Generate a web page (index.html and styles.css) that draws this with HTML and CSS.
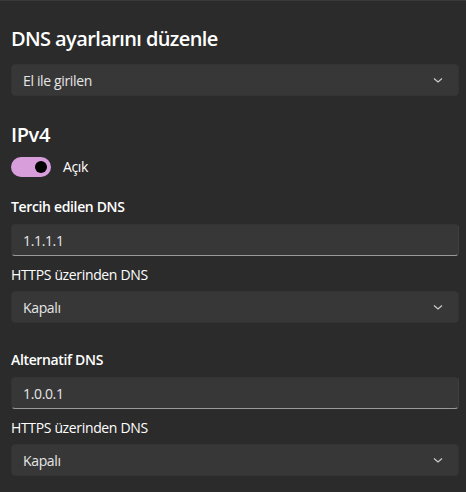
FILE: index.html
```html
<!DOCTYPE html>
<html lang="tr">
<head>
  <meta charset="UTF-8">
  <meta name="viewport" content="width=device-width, initial-scale=1.0">
  <title>DNS ayarlarını düzenle</title>
  <link rel="stylesheet" href="styles.css">
</head>
<body>

<div id="dialog">
  <h1 class="title">DNS ayarlarını düzenle</h1>

  <div class="select select-mode">
    <span>El ile girilen</span>
    <svg class="chevron" viewBox="0 0 12 12" width="12" height="12">
      <polyline points="2,4.5 6,8 10,4.5" fill="none" stroke="currentColor" stroke-width="1.1"/>
    </svg>
  </div>

  <h2 class="section">IPv4</h2>

  <div class="toggle-row">
    <div class="toggle"><span class="knob"></span></div>
    <span class="toggle-label">Açık</span>
  </div>

  <label class="field-label first">Tercih edilen DNS</label>
  <div class="textbox">1.1.1.1</div>

  <label class="sub-label">HTTPS üzerinden DNS</label>
  <div class="select">
    <span>Kapalı</span>
    <svg class="chevron" viewBox="0 0 12 12" width="12" height="12">
      <polyline points="2,4.5 6,8 10,4.5" fill="none" stroke="currentColor" stroke-width="1.1"/>
    </svg>
  </div>

  <label class="field-label second">Alternatif DNS</label>
  <div class="textbox">1.0.0.1</div>

  <label class="sub-label">HTTPS üzerinden DNS</label>
  <div class="select">
    <span>Kapalı</span>
    <svg class="chevron" viewBox="0 0 12 12" width="12" height="12">
      <polyline points="2,4.5 6,8 10,4.5" fill="none" stroke="currentColor" stroke-width="1.1"/>
    </svg>
  </div>
</div>

</body>
</html>
```

FILE: styles.css
```css
html, body {
  margin: 0;
  height: 100%;
  background-color: #2b2b2b;
}
body {
  font-family: "Open Sans", "Noto Sans", sans-serif;
  color: #ffffff;
  border-top: 1px solid #3a3a3a;
  box-sizing: border-box;
  letter-spacing: -0.35px;
}
#dialog {
  padding: 24px 7px 0 11px;
  display: flex;
  flex-direction: column;
}
.title {
  margin: 0;
  font-size: 20px;
  font-weight: 600;
  line-height: 28px;
  letter-spacing: -0.6px;
}
.section {
  margin: 25px 0 0;
  font-size: 20px;
  font-weight: 600;
  line-height: 28px;
  letter-spacing: -0.4px;
}
.select, .textbox {
  height: 32px;
  box-sizing: border-box;
  border-radius: 4px;
  background-color: #373737;
  border: 1px solid #333333;
  font-size: 14px;
  color: #e6e6e6;
  display: flex;
  align-items: center;
  padding: 0 12px 0 11px;
}
.select {
  justify-content: space-between;
  margin-top: 6px;
}
.select-mode {
  margin-top: 11px;
}
.chevron {
  color: #cfcfcf;
  margin-right: 2px;
}
.textbox {
  margin-top: 7px;
  border-bottom: 1px solid #9a9a9a;
  border-right-color: #3e3e3e;
}
.toggle-row {
  display: flex;
  align-items: center;
  margin-top: 8px;
}
.toggle {
  width: 40px;
  height: 20px;
  border-radius: 10px;
  background-color: #d89ddb;
  display: flex;
  align-items: center;
  justify-content: flex-end;
  padding: 0 4px;
  box-sizing: border-box;
}
.knob {
  width: 12px;
  height: 12px;
  border-radius: 50%;
  background-color: #000000;
}
.toggle-label {
  margin-left: 12px;
  font-size: 14px;
  line-height: 20px;
}
.field-label {
  font-size: 14px;
  font-weight: 600;
  line-height: 20px;
}
.field-label.first {
  margin-top: 20px;
}
.field-label.second {
  margin-top: 27px;
}
.sub-label {
  margin-top: 9px;
  font-size: 14px;
  line-height: 20px;
}
```
